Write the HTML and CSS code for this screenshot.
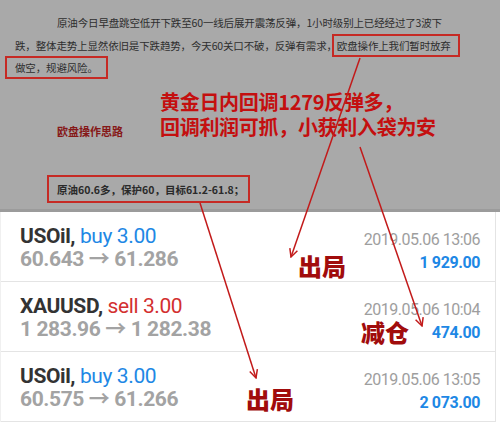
FILE: index.html
```html
<!DOCTYPE html>
<html lang="zh-CN">
<head>
    <meta charset="UTF-8">
    <meta name="viewport" content="width=device-width, initial-scale=1.0">
    <title>欧盘操作思路</title>
    <link rel="stylesheet" href="styles.css">
</head>
<body>
    <div class="page">
        <div class="article">
            <p class="analysis">原油今日早盘跳空低开下跌至60一线后展开震荡反弹，1小时级别上已经经过了3波下<br>跌，整体走势上显然依旧是下跌趋势，今天60关口不破，反弹有需求，<span class="mark mark-mid">欧盘操作上我们暂时放弃</span><br><span class="mark mark-start">做空，规避风险。</span></p>
            <div class="plan">
                <div class="plan-title">欧盘操作思路</div>
                <div class="headline">黄金日内回调1279反弹多，<br>回调利润可抓，小获利入袋为安</div>
            </div>
            <div class="plan-box">原油60.6多，保护60，目标61.2-61.8；</div>
        </div>

        <ul class="deals">
            <li class="deal">
                <div class="deal-main">
                    <div class="deal-title"><b>USOil,</b> <span class="buy">buy 3.00</span></div>
                    <div class="deal-price">60.643 → 61.286</div>
                </div>
                <div class="deal-side">
                    <div class="deal-time">2019.05.06 13:06</div>
                    <div class="deal-profit">1 929.00</div>
                </div>
            </li>
            <li class="deal">
                <div class="deal-main">
                    <div class="deal-title"><b>XAUUSD,</b> <span class="sell">sell 3.00</span></div>
                    <div class="deal-price">1 283.96 → 1 282.38</div>
                </div>
                <div class="deal-side">
                    <div class="deal-time">2019.05.06 10:04</div>
                    <div class="deal-profit">474.00</div>
                </div>
            </li>
            <li class="deal">
                <div class="deal-main">
                    <div class="deal-title"><b>USOil,</b> <span class="buy">buy 3.00</span></div>
                    <div class="deal-price">60.575 → 61.266</div>
                </div>
                <div class="deal-side">
                    <div class="deal-time">2019.05.06 13:05</div>
                    <div class="deal-profit">2 073.00</div>
                </div>
            </li>
        </ul>

        <div class="note note-exit1">出局</div>
        <div class="note note-reduce">减仓</div>
        <div class="note note-exit2">出局</div>

        <svg class="arrows" width="500" height="424" viewBox="0 0 500 424">
            <defs>
                <marker id="head" markerWidth="10" markerHeight="10" refX="9" refY="5" orient="auto" markerUnits="userSpaceOnUse">
                    <path d="M1,1 L9,5 L1,9" fill="none" stroke="#c21a1a" stroke-width="1.5"/>
                </marker>
            </defs>
            <line x1="360" y1="58" x2="291" y2="257" marker-end="url(#head)"/>
            <line x1="360" y1="147" x2="422" y2="326" marker-end="url(#head)"/>
            <line x1="200" y1="203" x2="256" y2="378" marker-end="url(#head)"/>
        </svg>
    </div>
</body>
</html>
```

FILE: styles.css
```css
body {
    margin: 0;
    padding: 0;
    background: #fff;
    font-family: Roboto, "Noto Sans CJK SC", sans-serif;
}
.page {
    position: relative;
    width: 500px;
    height: 424px;
    overflow: hidden;
}

/* 上半部：文章截图 */
.article {
    height: 209px;
    background-color: #a9a9a9;
    border-bottom: 3px solid #9b9b9b;
    font-family: "Noto Sans CJK SC", sans-serif;
    overflow: hidden;
}
.analysis {
    margin: 0;
    padding: 12px 0 0 15px;
    font-size: 10.5px;
    line-height: 22.5px;
    letter-spacing: -0.15px;
    color: #2e2e2e;
    text-indent: 42px;
    white-space: nowrap;
}
.mark {
    border: 2px solid #c62a24;
    padding: 2px 8px;
}
.mark-start {
    margin-left: -10px;
}
.mark-mid {
    padding: 2px 7px 2px 3px;
    margin: 0 -9px 0 -5px;
}
.plan {
    display: flex;
    align-items: flex-end;
    margin-top: 9px;
}
.plan-title {
    flex: 0 0 103px;
    padding-left: 57px;
    font-size: 11px;
    line-height: 16px;
    font-weight: bold;
    color: #861818;
}
.headline {
    font-size: 20px;
    line-height: 25px;
    letter-spacing: -0.3px;
    font-weight: bold;
    color: #c40f0f;
    white-space: nowrap;
}
.plan-box {
    box-sizing: border-box;
    display: flex;
    align-items: center;
    width: 203px;
    height: 28px;
    margin: 36px 0 0 47px;
    padding: 2px 0 0 8px;
    border: 2px solid #c62a24;
    font-size: 10.5px;
    font-weight: bold;
    color: #2a2a2a;
    white-space: nowrap;
}

/* 下半部：成交列表 */
.deals {
    list-style: none;
    margin: 0;
    padding: 0;
    width: 496px;
    border-left: 1px solid #f0f0f0;
    border-right: 1px solid #e4e4e4;
    box-sizing: border-box;
}
.deal {
    box-sizing: border-box;
    display: flex;
    justify-content: space-between;
    height: 70px;
    padding: 13px 15px 0 19px;
    border-bottom: 1px solid #e4e4e4;
}
.deal-main {
    font-size: 21px;
    line-height: 23px;
    letter-spacing: -0.4px;
}
.deal-title b {
    color: #333;
}
.buy {
    color: #1e88e5;
}
.sell {
    color: #d32f2f;
}
.deal-price {
    font-weight: bold;
    color: #a3a3a3;
}
.deal-side {
    margin-top: 3px;
    text-align: right;
    font-size: 16px;
    line-height: 23px;
}
.deal-time {
    color: #9e9e9e;
    letter-spacing: -0.5px;
}
.deal-profit {
    font-weight: bold;
    color: #1e88e5;
    letter-spacing: -0.4px;
}

/* 标注 */
.note {
    position: absolute;
    font-family: "Noto Sans CJK SC", sans-serif;
    font-size: 24px;
    line-height: 24px;
    font-weight: 900;
    color: #a10c0c;
}
.note-exit1 {
    left: 298px;
    top: 254px;
}
.note-reduce {
    left: 361px;
    top: 320px;
}
.note-exit2 {
    left: 246px;
    top: 387px;
}
.arrows {
    position: absolute;
    left: 0;
    top: 0;
    pointer-events: none;
}
.arrows line {
    stroke: #c21a1a;
    stroke-width: 1.5;
}
```
